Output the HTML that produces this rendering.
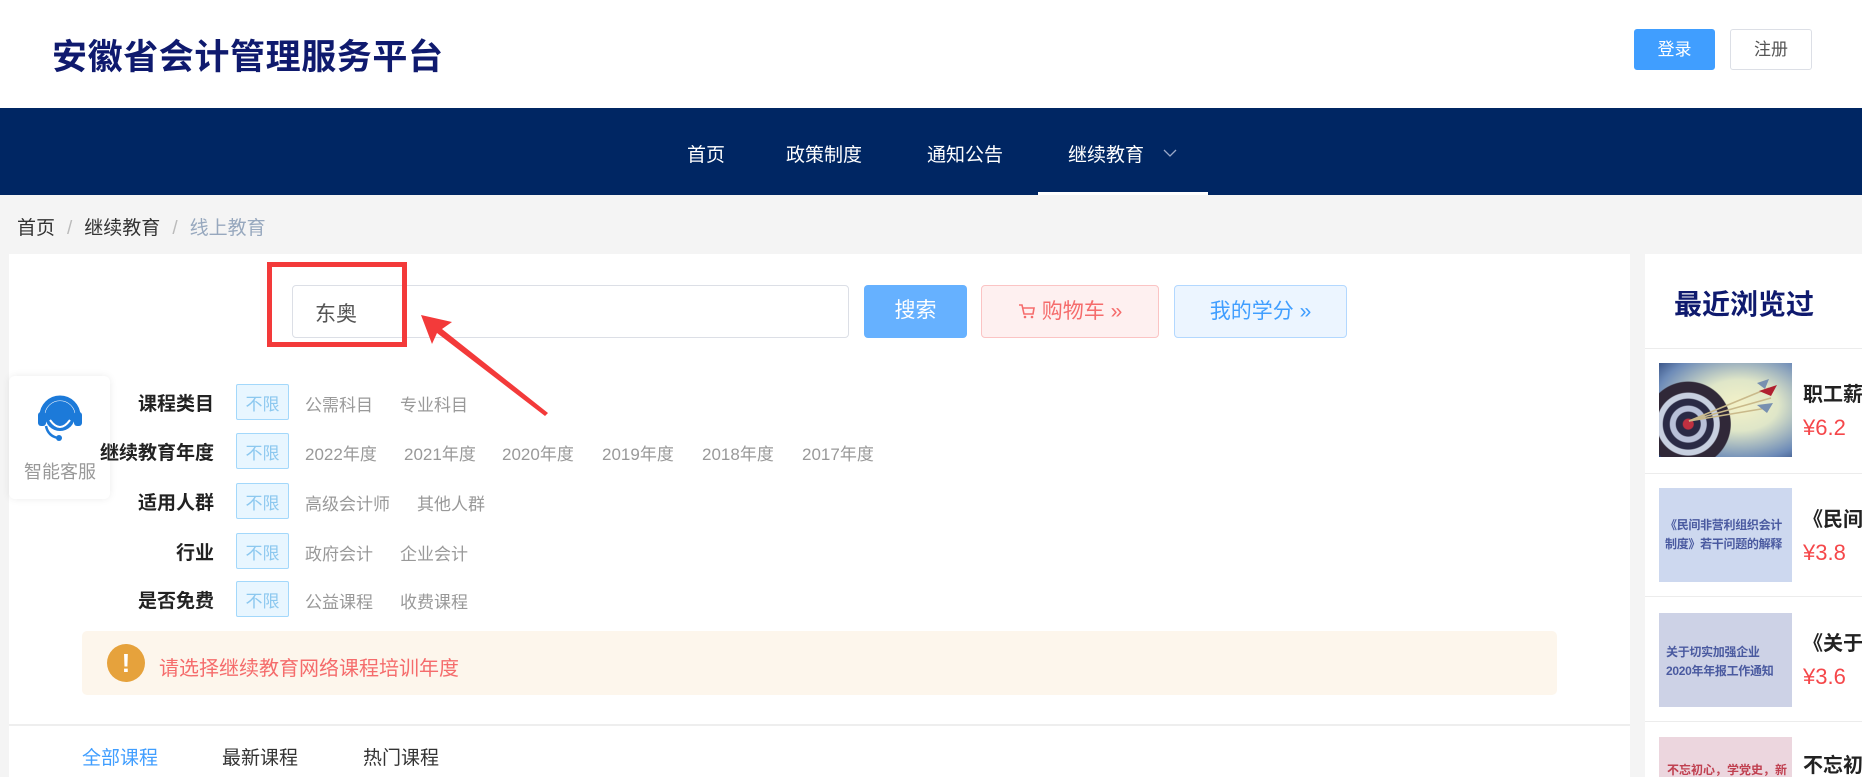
<!DOCTYPE html>
<html><head><meta charset="utf-8"><style>
*{margin:0;padding:0;box-sizing:border-box}
html,body{width:1862px;height:777px;overflow:hidden}
body{background:#f4f4f4;font-family:"Liberation Sans","Noto Sans CJK SC",sans-serif;position:relative}
.abs{position:absolute}
.hdr{left:0;top:0;width:1862px;height:108px;background:#fff}
.logo{left:52px;top:29px;font-size:35px;font-weight:bold;color:#0f1a6e;letter-spacing:0.6px}
.btn{height:41px;top:29px;border-radius:3px;font-size:17px;line-height:39px;text-align:center}
.nav{left:0;top:108px;width:1862px;height:87px;background:#002663}
.nav span{position:absolute;top:32px;color:#fff;font-size:19px}
.crumb{left:17px;top:213px;font-size:19px;color:#333}
.crumb i{font-style:normal;color:#bbb;margin:0 12px}
.main{left:9px;top:254px;width:1621px;height:523px;background:#fff}
.side{left:1645px;top:254px;width:217px;height:523px;background:#fff}
.lbl{position:absolute;right:1648px;font-size:19px;font-weight:bold;color:#222;white-space:nowrap}
.tag{position:absolute;left:236px;width:53px;height:36px;border:1px solid #a3d8fb;background:#e8f6ff;color:#8cc8ef;font-size:17px;line-height:40px;text-align:center;border-radius:2px}
.opt{position:absolute;font-size:17px;color:#999;white-space:nowrap}
.sb{height:53px;top:285px;border-radius:4px;font-size:21px;line-height:51px;text-align:center}
.row{position:absolute;left:1645px;width:217px;height:1px;background:#ececec}
.img{position:absolute;left:1659px;width:133px;height:94px;overflow:hidden}
.it{position:absolute;left:1803px;font-size:20px;font-weight:bold;color:#222;white-space:nowrap}
.pr{position:absolute;left:1803px;font-size:22px;color:#f5474a}
</style></head><body>
<div class="abs hdr"></div>
<div class="abs logo">安徽省会计管理服务平台</div>
<div class="abs btn" style="left:1634px;width:81px;background:#409eff;color:#fff;border:1px solid #409eff">登录</div>
<div class="abs btn" style="left:1730px;width:82px;background:#fff;color:#555;border:1px solid #dcdfe6">注册</div>
<div class="abs nav">
<span style="left:687px">首页</span>
<span style="left:786px">政策制度</span>
<span style="left:927px">通知公告</span>
<span style="left:1068px">继续教育</span>
<svg style="position:absolute;left:1163px;top:40px" width="14" height="10"><path d="M1 2 L7 8 L13 2" stroke="#9aa8c8" stroke-width="1.3" fill="none"/></svg>
<div style="position:absolute;left:1038px;top:84px;width:170px;height:3px;background:#fff"></div>
</div>
<div class="abs crumb">首页<i>/</i>继续教育<i>/</i><span style="color:#97a8be">线上教育</span></div>
<div class="abs main"></div>
<div class="abs side"></div>

<div class="abs" style="left:292px;top:285px;width:557px;height:53px;border:1px solid #dcdfe6;border-radius:4px;background:#fff"></div>
<div class="abs" style="left:315px;top:298px;font-size:21px;color:#555">东奥</div>
<div class="abs" style="left:267px;top:262px;width:140px;height:85px;border:5px solid #f33a3a"></div>
<div class="abs sb" style="left:864px;width:103px;background:#66b1ff;color:#fff">搜索</div>
<div class="abs sb" style="left:981px;width:178px;background:#fef0f0;border:1px solid #fbc4c4;color:#f56c6c">
<svg width="18" height="16" style="vertical-align:-1px;margin-right:6px"><path d="M1 2 H4 L6 11 H15 L16 5 H5" stroke="#f56c6c" stroke-width="1.6" fill="none"/><circle cx="7" cy="14" r="1.3" fill="#f56c6c"/><circle cx="14" cy="14" r="1.3" fill="#f56c6c"/></svg>购物车 »</div>
<div class="abs sb" style="left:1174px;width:173px;background:#ecf5ff;border:1px solid #b3d8ff;color:#409eff">我的学分 »</div>
<svg class="abs" style="left:0;top:0" width="600" height="430"><polygon points="421,315 452,322 442,329 548,413 545,416 437,333 432,344" fill="#f33a3a"/></svg>

<div class="abs" style="left:9px;top:376px;width:101px;height:123px;background:#fff;border-radius:6px;box-shadow:0 0 8px rgba(0,0,0,.08)"></div>
<svg class="abs" style="left:36px;top:390px" width="48" height="54" viewBox="0 0 48 54">
<path d="M6 26 A18 18 0 0 1 42 26" stroke="#1c7ad9" stroke-width="5" fill="none"/>
<circle cx="24" cy="26" r="15" fill="#1c7ad9"/>
<rect x="2" y="22" width="8" height="14" rx="3" fill="#1c7ad9"/><rect x="38" y="22" width="8" height="14" rx="3" fill="#1c7ad9"/>
<path d="M14 30 Q24 44 34 30" stroke="#fff" stroke-width="2" fill="none"/>
<path d="M10 36 Q12 46 22 48" stroke="#1c7ad9" stroke-width="2.5" fill="none"/><circle cx="23" cy="48" r="3" fill="#1c7ad9"/>
</svg>
<div class="abs" style="left:24px;top:458px;font-size:18px;color:#999">智能客服</div>

<div class="lbl" style="top:389px">课程类目</div>
<div class="lbl" style="top:438px">继续教育年度</div>
<div class="lbl" style="top:488px">适用人群</div>
<div class="lbl" style="top:538px">行业</div>
<div class="lbl" style="top:586px">是否免费</div>
<div class="tag" style="top:384px">不限</div>
<div class="tag" style="top:433px">不限</div>
<div class="tag" style="top:483px">不限</div>
<div class="tag" style="top:533px">不限</div>
<div class="tag" style="top:581px">不限</div>
<div class="opt" style="left:305px;top:391px">公需科目</div><div class="opt" style="left:400px;top:391px">专业科目</div>
<div class="opt" style="left:305px;top:440px">2022年度</div><div class="opt" style="left:404px;top:440px">2021年度</div><div class="opt" style="left:502px;top:440px">2020年度</div><div class="opt" style="left:602px;top:440px">2019年度</div><div class="opt" style="left:702px;top:440px">2018年度</div><div class="opt" style="left:802px;top:440px">2017年度</div>
<div class="opt" style="left:305px;top:490px">高级会计师</div><div class="opt" style="left:417px;top:490px">其他人群</div>
<div class="opt" style="left:305px;top:540px">政府会计</div><div class="opt" style="left:400px;top:540px">企业会计</div>
<div class="opt" style="left:305px;top:588px">公益课程</div><div class="opt" style="left:400px;top:588px">收费课程</div>

<div class="abs" style="left:82px;top:631px;width:1475px;height:64px;background:#fdf6ec;border-radius:5px"></div>
<div class="abs" style="left:107px;top:644px;width:38px;height:38px;border-radius:50%;background:#e6a23c;color:#fff;font-size:26px;font-weight:bold;text-align:center;line-height:38px">!</div>
<div class="abs" style="left:159px;top:652px;font-size:20px;color:#f56c6c">请选择继续教育网络课程培训年度</div>
<div class="abs" style="left:9px;top:724px;width:1621px;height:2px;background:#eee"></div>
<div class="abs" style="left:82px;top:743px;font-size:19px;color:#409eff">全部课程</div>
<div class="abs" style="left:222px;top:743px;font-size:19px;color:#333">最新课程</div>
<div class="abs" style="left:363px;top:743px;font-size:19px;color:#333">热门课程</div>

<div class="abs" style="left:1674px;top:283px;font-size:28px;font-weight:bold;color:#0f1a6e">最近浏览过</div>
<div class="row" style="top:348px"></div>
<div class="img" style="top:363px;background:radial-gradient(circle at 22% 65%,#c03040 0 5px,#2a2a45 6px 12px,#b8c0d8 13px 18px,#2a2a45 19px 25px,#c8d0e0 26px 31px,#302838 32px 42px,transparent 43px),radial-gradient(ellipse at 60% 45%,#f4f2c8 0,#dfe6c8 35%,#6d8bb8 75%,#213a70 100%)"></div>
<svg class="abs" style="left:1659px;top:363px" width="133" height="94"><g stroke="#c9b98a" stroke-width="1.5"><line x1="30" y1="58" x2="110" y2="25"/><line x1="30" y1="58" x2="112" y2="35"/><line x1="30" y1="58" x2="108" y2="45"/></g><path d="M100 28 L118 22 L112 33Z" fill="#b02030"/><path d="M98 20 L110 16 L106 26Z" fill="#7890b0"/><path d="M98 42 L114 40 L108 50Z" fill="#7890b0"/></svg>
<div class="it" style="top:378px">职工薪酬</div><div class="pr" style="top:415px">¥6.2</div>
<div class="row" style="top:473px"></div>
<div class="img" style="top:488px;background:#cdd8ef;color:#4a5aa0;font-size:12px;font-weight:bold;padding:28px 2px 0 6px;line-height:19px;letter-spacing:-0.3px">《民间非营利组织会计制度》若干问题的解释</div>
<div class="it" style="top:503px">《民间非营</div><div class="pr" style="top:540px">¥3.8</div>
<div class="row" style="top:596px"></div>
<div class="img" style="top:613px;background:#cdd2e6;color:#4a5aa0;font-size:12px;font-weight:bold;padding:30px 4px 0 7px;line-height:19px;letter-spacing:-0.3px">关于切实加强企业<br>2020年年报工作通知</div>
<div class="it" style="top:627px">《关于切实</div><div class="pr" style="top:664px">¥3.6</div>
<div class="row" style="top:721px"></div>
<div class="img" style="top:737px;height:40px;background:#ecd6de;color:#c04050;font-size:12px;font-weight:bold;padding:24px 0 0 8px;white-space:nowrap">不忘初心，学党史，新</div>
<div class="it" style="top:749px">不忘初心</div>
</body></html>
